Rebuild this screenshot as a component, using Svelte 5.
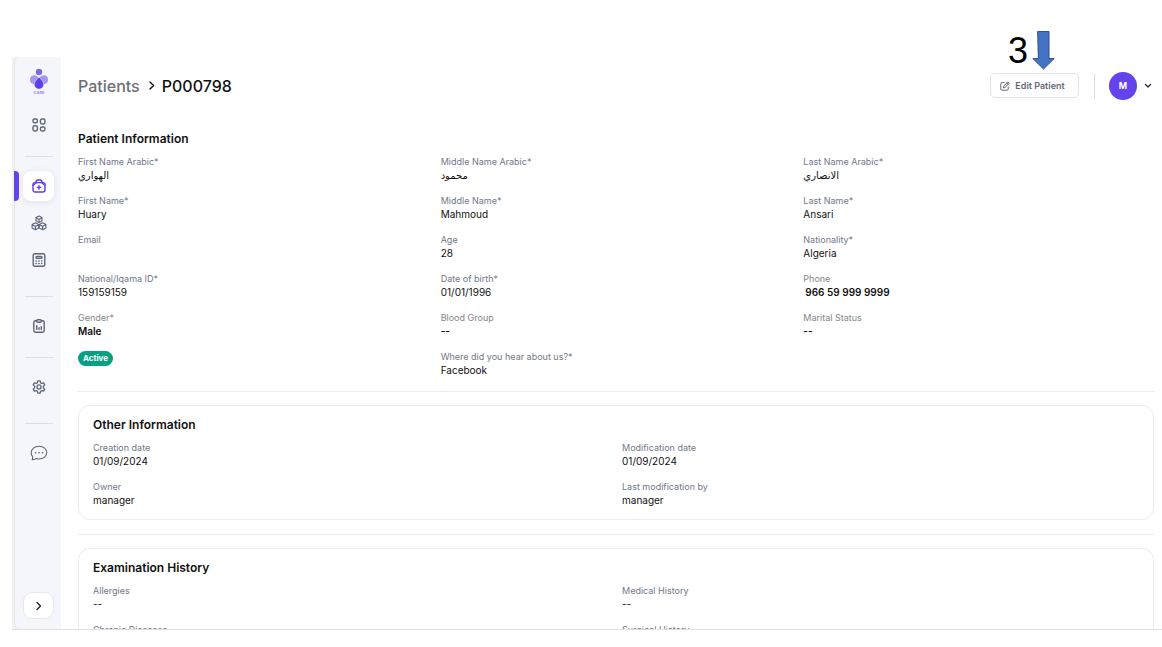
<script>
    let patient = [
        { label: 'First Name Arabic*', value: 'الهواري' },
        { label: 'Middle Name Arabic*', value: 'محمود' },
        { label: 'Last Name Arabic*', value: 'الانصاري' },
        { label: 'First Name*', value: 'Huary' },
        { label: 'Middle Name*', value: 'Mahmoud' },
        { label: 'Last Name*', value: 'Ansari' },
        { label: 'Email', value: '' },
        { label: 'Age', value: '28' },
        { label: 'Nationality*', value: 'Algeria' },
        { label: 'National/Iqama ID*', value: '159159159' },
        { label: 'Date of birth*', value: '01/01/1996' },
        { label: 'Phone', value: '966 59 999 9999', strong: true, phone: true },
        { label: 'Gender*', value: 'Male', strong: true },
        { label: 'Blood Group', value: '--', strong: true },
        { label: 'Marital Status', value: '--', strong: true },
        { status: 'Active' },
        { label: 'Where did you hear about us?*', value: 'Facebook' }
    ]

    let other = [
        { label: 'Creation date', value: '01/09/2024' },
        { label: 'Modification date', value: '01/09/2024' },
        { label: 'Owner', value: 'manager' },
        { label: 'Last modification by', value: 'manager' }
    ]

    let examination = [
        { label: 'Allergies', value: '--' },
        { label: 'Medical History', value: '--' },
        { label: 'Chronic Diseases', value: '--' },
        { label: 'Surgical History', value: '--' }
    ]

    let expanded = $state(false)
</script>

{#snippet fields(list)}
    {#each list as item}
        {#if item.status}
            <div class="field"><span class="badge">{item.status}</span></div>
        {:else}
            <dl class="field" class:strong={item.strong}>
                <dt>{item.label}</dt>
                <dd class:phone={item.phone}>{item.value}</dd>
            </dl>
        {/if}
    {/each}
{/snippet}

<div class="page">
    <div class="window">
        <nav class="sidebar" aria-label="Main">
            <a class="logo" href="#home" aria-label="Care">
                <svg width="20" height="26" viewBox="0 0 20 26">
                    <circle cx="10" cy="4" r="3.2" fill="#7b6be0" />
                    <path d="M10 10.500C8.500 7.500 4.500 6.300 2.400 8.200.2 10.200.6 14 3 15.600c2.200 1.400 5.500.4 7-1.600z" fill="#a794fb" />
                    <path d="M10 10.500c1.500-3 5.500-4.200 7.600-2.300 2.200 2 1.800 5.800-.6 7.400-2.200 1.400-5.500.4-7-1.600z" fill="#a794fb" />
                    <path d="M10 9c2.400 2.500 4.800 5 4.800 7.400a4.800 4.800 0 0 1-9.600 0C5.200 14 7.600 11.500 10 9z" fill="#5f3ee8" stroke="#f5f6fb" stroke-width=".6" />
                    <text x="10" y="26" text-anchor="middle">CARE</text>
                </svg>
            </a>

            <div class="group">
                <a class="item" href="#dashboard" aria-label="Dashboard">
                    <svg width="14" height="14" viewBox="0 0 14 14">
                        <rect x="1" y="1" width="4.400" height="3.800" rx="1.600" />
                        <rect x="8.400" y="1" width="4.600" height="5" rx="1.700" />
                        <rect x="1" y="7.800" width="4.400" height="5.200" rx="1.700" />
                        <rect x="8.400" y="9" width="4.600" height="4" rx="1.700" />
                    </svg>
                </a>
            </div>

            <div class="group spaced">
                <a class="item active" href="#patients" aria-label="Patients">
                    <svg width="14" height="14" viewBox="0 0 14 14">
                        <rect x="1" y="3.600" width="12" height="9.400" rx="2" />
                        <path d="M3.800 3.400C4 1.600 4.600 1 6 1h2c1.400 0 2 .6 2.200 2.400M1.200 6.200c1.400-.4 1.800-2 3-2.400M12.800 6.200c-1.400-.4-1.800-2-3-2.400" />
                        <path d="M7 6.600v3.600M5.200 8.400h3.600" />
                    </svg>
                </a>
                <a class="item" href="#inventory" aria-label="Inventory">
                    <svg class="thin" width="16" height="16" viewBox="0 0 16 16">
                        <path d="M8 1l3 1.600v3.200L8 7.600 5 5.800V2.600zM5 2.700l3 1.700 3-1.700M8 4.400v3.200" />
                        <path d="M4.400 7.800l3.300 1.700v3.400l-3.300 1.800-3.300-1.800V9.500zM1.200 9.600l3.200 1.800 3.200-1.800M4.400 11.400v3.200" />
                        <path d="M11.600 7.800l3.300 1.700v3.400l-3.300 1.800-3.300-1.800V9.500zM8.400 9.600l3.200 1.800 3.200-1.800M11.600 11.400v3.200" />
                    </svg>
                </a>
                <a class="item" href="#billing" aria-label="Billing">
                    <svg width="14" height="14" viewBox="0 0 14 14">
                        <rect x="1.200" y=".8" width="11.600" height="12.400" rx="1.600" />
                        <rect x="4" y="3.400" width="6" height="1.800" rx=".8" />
                        <path class="dots" d="M4 8h.3M6.800 8h.3M9.600 8h.3M4 10.600h.3M6.800 10.600h.3M9.600 10.600h.3" />
                    </svg>
                </a>
            </div>

            <div class="group">
                <a class="item" href="#reports" aria-label="Reports">
                    <svg width="14" height="14" viewBox="0 0 14 14">
                        <path d="M4.600 1.800H3.400a1.600 1.600 0 0 0-1.600 1.600v8.200a1.600 1.600 0 0 0 1.600 1.600h7.200a1.600 1.600 0 0 0 1.600-1.600V3.400a1.600 1.600 0 0 0-1.600-1.600H9.400" />
                        <rect x="4.600" y=".7" width="4.800" height="2.600" rx="1.200" />
                        <path d="M4.700 6.600v3.800M7 8.800v1.600M9.300 7.600v2.800" />
                    </svg>
                </a>
            </div>

            <div class="group spaced">
                <a class="item" href="#settings" aria-label="Settings">
                    <svg width="14" height="14" viewBox="0 0 24 24">
                        <path class="gear" d="M10 1.500h4l.7 3.200 2 1.200 3.200-1 2 3.500-2.400 2.200v2.800l2.400 2.200-2 3.500-3.200-1-2 1.200-.7 3.200h-4l-.7-3.200-2-1.200-3.200 1-2-3.500 2.400-2.200v-2.800L2.100 8.400l2-3.500 3.200 1 2-1.200z" />
                        <circle class="gear" cx="12" cy="12" r="3.500" />
                    </svg>
                </a>
            </div>

            <div class="group">
                <a class="item" href="#messages" aria-label="Messages">
                    <svg class="thin" width="18" height="16" viewBox="0 0 18 16">
                        <path d="M2.200 14.800c.5-1 .7-2 .4-3.100A6.500 6.500 0 0 1 1.200 7.600C1.200 4 4.600 1.200 9 1.200s7.800 2.800 7.800 6.400S13.400 14 9 14c-1.100 0-2.100-.1-3-.4-1.200.8-2.400 1.200-3.800 1.200z" />
                        <path class="dots" d="M5.400 7.800h.2M8.900 7.800h.2M12.400 7.800h.2" />
                    </svg>
                </a>
            </div>

            <button class="expand" aria-label="Expand menu" aria-expanded={expanded} onclick={() => (expanded = !expanded)}>
                <svg width="8" height="10" viewBox="0 0 8 10"><path d="M2 1.500L5.500 5 2 8.500" /></svg>
            </button>
        </nav>

        <main>
            <header>
                <h1>
                    <a href="#patients">Patients</a>
                    <svg width="6" height="9" viewBox="0 0 6 9"><path d="M1 1l3.600 3.500L1 8" /></svg>
                    <span>P000798</span>
                </h1>
                <button class="edit">
                    <svg width="10" height="10" viewBox="0 0 10 10">
                        <path d="M4.200 1.600H1.800a1 1 0 0 0-1 1v5.600a1 1 0 0 0 1 1h5.400a1 1 0 0 0 1-1V6" />
                        <path d="M3.600 6.600l.4-1.900L7.900.9l1.300 1.300-3.800 4zM6.800 2l1.300 1.300" />
                    </svg>
                    Edit Patient
                </button>
                <button class="account" aria-label="Account">
                    <span class="avatar">M</span>
                    <svg width="8" height="6" viewBox="0 0 8 6"><path d="M1.500 1.500L4 4l2.500-2.500" /></svg>
                </button>
            </header>

            <section>
                <h2>Patient Information</h2>
                <div class="grid three">{@render fields(patient)}</div>
            </section>
            <hr />
            <section class="card">
                <h2>Other Information</h2>
                <div class="grid two">{@render fields(other)}</div>
            </section>
            <hr />
            <section class="card">
                <h2>Examination History</h2>
                <div class="grid two">{@render fields(examination)}</div>
            </section>
        </main>
    </div>

    <div class="step">
        <span>3</span>
        <svg width="23" height="39" viewBox="0 0 23 39">
            <path d="M6 .5h11v27h5.200L11.500 38 .8 27.500H6z" />
        </svg>
    </div>
</div>

<style>
    :global(body) {
        margin: 0;
        background: #fff;
    }

    .page {
        position: relative;
        box-sizing: border-box;
        height: 100vh;
        padding: 57px 0 17px 12px;
        font-family: Inter, "DejaVu Sans", sans-serif;
        color: #111;
    }

    .window {
        box-sizing: border-box;
        display: flex;
        height: 100%;
        overflow: hidden;
        border-bottom: 1px solid #e0e0e3;
        background: linear-gradient(90deg, #f2f2f3 8px, #fff 8px);
    }

    svg {
        fill: none;
        stroke: currentColor;
        stroke-width: 1.4;
        stroke-linecap: round;
        stroke-linejoin: round;
    }

    .sidebar {
        box-sizing: border-box;
        flex: none;
        display: flex;
        flex-direction: column;
        align-items: center;
        width: 47px;
        margin-left: 2px;
        padding: 10px 0 10px 1px;
        border-left: 1px solid #e6e6ea;
        border-radius: 6px 0 0 6px;
        background: #f5f6fb;
        color: #5f6578;
    }

    .logo {
        height: 30px;
        margin-bottom: 13px;
        padding-top: 1px;
        box-sizing: border-box;
    }

    .logo svg {
        display: block;
        overflow: visible;
        stroke: none;
    }

    .logo text {
        fill: #9d8af5;
        font-size: 4px;
        font-weight: 700;
    }

    .group {
        display: flex;
        flex-direction: column;
        align-items: center;
        gap: 7px;
        width: 100%;
    }

    .group + .group::before {
        content: "";
        width: 28px;
        height: 1px;
        margin: 16px 0 7px;
        background: #dddee4;
    }

    .spaced {
        padding-bottom: 5px;
    }

    .item {
        position: relative;
        display: flex;
        align-items: center;
        justify-content: center;
        width: 31px;
        height: 30px;
        border-radius: 8px;
        color: inherit;
    }

    .active {
        background: #fff;
        box-shadow: 0 1px 6px rgba(60, 60, 110, 0.1);
        color: #5f3ee8;
    }

    .active::before {
        content: "";
        position: absolute;
        left: -9px;
        width: 5px;
        height: 30px;
        border-radius: 0 4px 4px 0;
        background: #6442ec;
    }

    .thin {
        stroke-width: 1.1;
    }

    .dots {
        stroke-width: 1.5;
    }

    .gear {
        stroke-width: 2.2;
    }

    .expand {
        display: flex;
        align-items: center;
        justify-content: center;
        width: 31px;
        height: 27px;
        margin-top: auto;
        padding: 0;
        border: 1px solid #e8e8ee;
        border-radius: 9px;
        background: #fff;
        color: #222;
    }

    main {
        flex: 1;
        min-width: 0;
        padding: 0 8px 0 17px;
        overflow: hidden;
        background: #fff;
    }

    header {
        display: flex;
        align-items: center;
        height: 57px;
        margin-bottom: 17px;
    }

    h1 {
        display: flex;
        align-items: center;
        gap: 7px;
        margin: 0 auto 0 0;
        font-size: 16px;
        font-weight: 500;
        line-height: 20px;
    }

    h1 a {
        margin-right: 2px;
        color: #6f6f73;
        text-decoration: none;
    }

    .edit {
        display: flex;
        align-items: center;
        justify-content: center;
        gap: 5px;
        width: 89px;
        height: 25px;
        padding: 0 4px 0 0;
        border: 1px solid #e4e4e8;
        border-radius: 5px;
        background: #fff;
        color: #646878;
        font: 600 9px/12px Inter, sans-serif;
    }

    .edit svg {
        stroke-width: 1;
    }

    .account {
        display: flex;
        align-items: center;
        gap: 7px;
        margin-left: 15px;
        padding: 0 2px 0 0;
        border: 0;
        background: none;
        color: #333;
    }

    .account::before {
        content: "";
        width: 1px;
        height: 24px;
        margin-right: 7px;
        background: #dcdce0;
    }

    .avatar {
        width: 28px;
        height: 28px;
        border-radius: 50%;
        background: #6442ec;
        color: #fff;
        font: 700 9px/28px Inter, sans-serif;
        text-align: center;
    }

    h2 {
        margin: 0 0 9px;
        font-size: 12px;
        font-weight: 600;
        line-height: 16px;
    }

    .grid {
        display: grid;
        gap: 12px;
    }

    .three {
        grid-template-columns: repeat(3, 1fr);
    }

    .two {
        grid-template-columns: repeat(2, 1fr);
    }

    .field {
        height: 27px;
        margin: 0;
    }

    dt {
        color: #71788a;
        font-size: 9px;
        line-height: 12px;
    }

    dd {
        margin: 0;
        font-size: 10px;
        line-height: 15px;
    }

    .strong dt {
        color: #858589;
    }

    .strong dd {
        font-weight: 600;
    }

    .strong .phone {
        padding-left: 2px;
    }

    .badge {
        display: block;
        width: fit-content;
        padding: 0 5px;
        border-radius: 8px;
        background: #0a9f83;
        color: #fff;
        font-size: 8px;
        font-weight: 700;
        line-height: 15px;
    }

    hr {
        height: 1px;
        margin: 13px 0;
        border: 0;
        background: #ececee;
    }

    .card {
        padding: 11px 14px;
        border: 1px solid #ececee;
        border-radius: 12px;
    }

    .card + hr {
        margin-top: 14px;
    }

    .step {
        position: absolute;
        top: 31px;
        right: 107px;
        display: flex;
        gap: 4px;
        color: #000;
        font: 36px/40px "Liberation Sans", Arial, sans-serif;
    }

    .step path {
        fill: #4472c4;
        stroke: #2f528f;
        stroke-width: 1;
        stroke-linejoin: miter;
    }
</style>
